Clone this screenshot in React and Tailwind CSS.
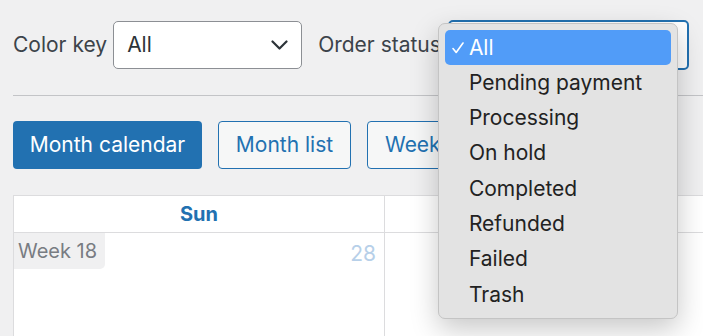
import React from "react";

const statuses = [
  "All",
  "Pending payment",
  "Processing",
  "On hold",
  "Completed",
  "Refunded",
  "Failed",
  "Trash",
];

const Chevron = () => (
  <svg width="17" height="10" viewBox="0 0 17 10" fill="none">
    <path d="M1.5 1.5l7 7 7-7" stroke="#2c3338" strokeWidth="2.2" strokeLinecap="round" strokeLinejoin="round" />
  </svg>
);

const Check = () => (
  <svg width="12" height="12" viewBox="0 0 12 12" fill="none">
    <path d="M1 6.5l3.2 4L11 1" stroke="#fff" strokeWidth="1.6" strokeLinecap="round" strokeLinejoin="round" />
  </svg>
);

const StatusMenu = () => (
  <div className="absolute left-[-12px] top-[1px] w-[240px] h-[296px] rounded-[7px] border border-[#c4c4c4] bg-[#e3e3e3] shadow-[0_10px_28px_rgba(0,0,0,0.22)] pt-[6px] px-[6px] z-10 text-[21px]">
    {statuses.map((s, i) => (
      <div
        key={s}
        className={
          i === 0
            ? "relative h-[35px] rounded-[5px] bg-[#519cf8] text-white flex items-center pl-[24px]"
            : "relative h-[35.3px] text-[#222] flex items-center pl-[24px]"
        }
      >
        {i === 0 && (
          <span className="absolute left-[7px] top-[12px]">
            <Check />
          </span>
        )}
        {s}
      </div>
    ))}
  </div>
);

export default function App() {
  return (
    <div
      className="w-[703px] h-[336px] overflow-hidden bg-[#f0f0f1] pl-[13px] pt-[20px] text-[21px]"
      style={{ fontFamily: "Inter, 'Noto Sans', sans-serif" }}
    >
      <div className="flex items-center h-[50px] whitespace-nowrap">
        <span className="text-[#3c434a] mr-[6px]">Color key</span>
        <div className="shrink-0 w-[189px] h-[48px] border border-[#8c8f94] rounded-[5px] bg-white flex items-center justify-between pl-[13px] pr-[13px] text-[#2c3338]">
          <span>All</span>
          <Chevron />
        </div>
        <span className="text-[#3c434a] ml-[16px]">Order status</span>
        <div className="relative shrink-0 ml-[7px] w-[241px] h-[50px] border-2 border-[#2271b1] rounded-[5px] bg-white">
          <StatusMenu />
        </div>
      </div>

      <div className="mt-[25px] h-px bg-[#c3c4c7]" />

      <div className="mt-[25px] flex gap-[16px] h-[48px] whitespace-nowrap">
        <button className="shrink-0 h-full w-[189px] rounded-[4px] bg-[#2271b1] text-white">Month calendar</button>
        <button className="shrink-0 h-full w-[133px] rounded-[4px] border border-[#2271b1] bg-[#f6f7f7] text-[#2271b1]">Month list</button>
        <button className="shrink-0 h-full w-[160px] rounded-[4px] border border-[#2271b1] bg-[#f6f7f7] text-[#2271b1] text-left pl-[17px]">Week calendar</button>
        <button className="shrink-0 h-full w-[130px] rounded-[4px] border border-[#2271b1] bg-[#f6f7f7] text-[#2271b1]">Week list</button>
      </div>

      <div className="mt-[26px] w-[760px] h-[200px] bg-white border-t border-l border-[#dcdcde] flex flex-col">
        <div className="flex h-[37px] border-b border-[#dcdcde] text-[20px] font-bold text-[#2271b1]">
          <div className="w-[371px] border-r border-[#dcdcde] flex items-center justify-center">Sun</div>
          <div className="w-[371px] border-r border-[#dcdcde]" />
        </div>
        <div className="flex flex-1">
          <div className="w-[371px] border-r border-[#dcdcde] flex items-start justify-between">
            <div className="w-[91px] h-[36px] bg-[#f0f0f1] rounded-br-[5px] flex items-center pl-[4px] text-[#787c82] text-[20px]">Week 18</div>
            <div className="pr-[8px] pt-[5px] text-[#b7d0e9]">28</div>
          </div>
          <div className="w-[371px] border-r border-[#dcdcde]" />
        </div>
      </div>
    </div>
  );
}
